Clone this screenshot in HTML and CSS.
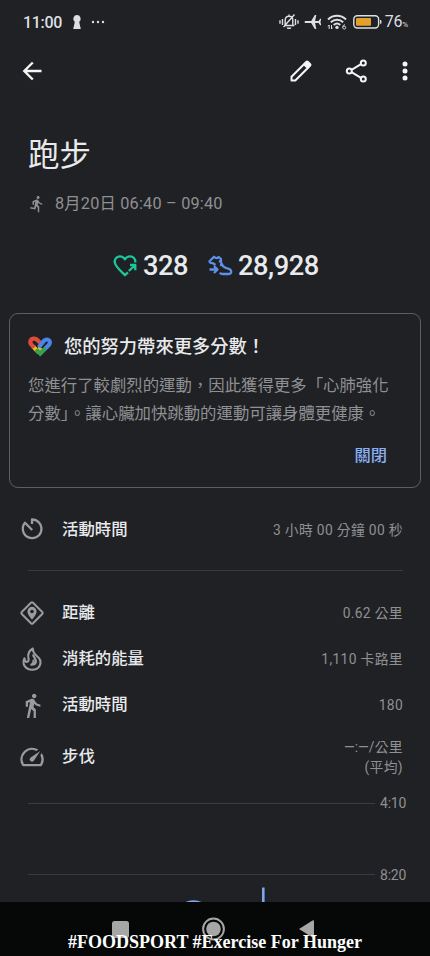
FILE: index.html
```html
<!DOCTYPE html>
<html lang="zh-Hant">
<head>
<meta charset="utf-8">
<meta name="viewport" content="width=device-width, initial-scale=1">
<title>跑步</title>
<link rel="stylesheet" href="styles.css">
</head>
<body>
<div class="screen">
  <header class="status">
    <span class="clock">11:00</span>
    <svg class="keyhole" width="10" height="16" viewBox="0 0 10 16"><path d="M5 1a3.700 3.700 0 0 0-2.400 6.500V9L1.200 15h7.600L7.400 9V7.500A3.700 3.700 0 0 0 5 1z"/></svg>
    <svg class="dots" width="14" height="4" viewBox="0 0 14 4"><circle cx="2" cy="2" r="1.200"/><circle cx="7" cy="2" r="1.200"/><circle cx="12" cy="2" r="1.200"/></svg>
    <span class="spacer"></span>
    <svg class="mute" width="20" height="18" viewBox="0 0 20 18"><path class="line" d="M5 12.500h10.500M6.200 12V7.300c0-2.500 1.500-4 3.800-4 2.200 0 3.800 1.500 3.800 4V12M10 1.500v1.500M15.500 1.500 4.500 14M3.500 6v6M1 7.300v3.400M16.500 6v6M19 7.300v3.400"/><path d="M7.500 14.500h5L11.500 16h-3z"/></svg>
    <svg class="plane" width="18" height="16" viewBox="0 0 18 16"><path d="M.5 8c0-.7.7-1.100 1.500-1.100h5.200L10.800 1h1.500l-1.200 5.900h3.500l1.500-2.100h1.100L16.500 8l.7 3.200h-1.100l-1.500-2.100h-3.500l1.200 5.900h-1.500L7.200 9.100H2C1.200 9.100.5 8.700.5 8z"/></svg>
    <svg class="wifi" width="20" height="16" viewBox="0 0 20 16"><path class="line thick" d="M1 5.500c5-5 13-5 18 0M3.800 8.300c3.500-3.400 8.900-3.400 12.400 0M6.700 11c2-1.800 4.600-1.800 6.600 0"/><circle cx="10" cy="13.400" r="1.700"/><path class="line thin" d="M2.200 15v-4L1 12.300M4.500 11v4l1.200-1.300M18 10.800c-1.500.2-2.300 1-2.300 2.500 0 2.300 3 2.300 3 .3 0-1.700-2.300-1.700-2.900-.3"/></svg>
    <svg class="battery" width="29" height="14" viewBox="0 0 29 14"><rect class="line" x=".8" y=".8" width="24.800" height="12.200" rx="3.500"/><rect class="charge" x="3" y="3" width="15" height="7.800" rx="1"/><path d="M27 5h.5c.8 0 1 .7 1 1.900s-.2 1.900-1 1.900H27z"/></svg>
    <span class="percent">76<small>%</small></span>
  </header>

  <nav class="appbar">
    <svg width="24" height="24" viewBox="0 0 24 24"><path class="back" d="M21.500 12H4M12.800 3.500 4.300 12l8.500 8.500"/></svg>
    <span class="spacer"></span>
    <svg class="edit" width="24" height="24" viewBox="0 0 24 24"><path class="line" d="M2.500 21.500v-3.800L15 5.200l3.800 3.800L6.300 21.500z"/><path d="m14.300 4.500 2.400-2.400c.8-.8 1.900-.8 2.700 0l2.500 2.500c.8.800.8 1.900 0 2.700l-2.400 2.400z"/></svg>
    <svg class="share" width="24" height="24" viewBox="0 0 24 24"><path class="line" d="M6.500 10.800 16 5.200M6.500 13.200l9.500 5.600"/><circle class="line" cx="4.300" cy="12" r="2.500"/><circle class="line" cx="18.300" cy="4" r="2.500"/><circle class="line" cx="18.300" cy="20" r="2.500"/></svg>
    <svg class="more" width="6" height="22" viewBox="0 0 6 22"><circle cx="3" cy="4" r="2.500"/><circle cx="3" cy="11" r="2.500"/><circle cx="3" cy="18" r="2.500"/></svg>
  </nav>

  <section class="intro">
    <h1>跑步</h1>
    <p class="date">
      <svg width="18" height="18" viewBox="0 0 24 24"><path d="M13.490 5.480c1.100 0 2-.9 2-2s-.9-2-2-2-2 .9-2 2 .9 2 2 2zm-3.600 13.900 1-4.400 2.100 2v6h2v-7.500l-2.100-2 .6-3c1.300 1.500 3.300 2.500 5.500 2.500v-2c-1.900 0-3.500-1-4.300-2.400l-1-1.600c-.4-.6-1-1-1.700-1-.3 0-.5.100-.8.100l-5.200 2.200v4.700h2v-3.400l1.800-.7-1.600 8.100-4.900-1-.4 2z"/></svg>
      <span>8月20日 06:40 – 09:40</span>
    </p>
  </section>

  <section class="scores">
    <svg class="heart" width="24" height="22" viewBox="0 0 24 22"><path d="M22.300 7.500c.3-3.600-2.200-6.200-5.300-6.200-2.200 0-3.900 1-5 3-1.200-2-2.900-3-5.200-3C3.400 1.300.9 4.700 2 8.200c1.100 4 5.800 7.600 10 12l3-2.800M15.800 16l6.500-6M17 10h5.300v5.300"/></svg>
    <strong>328</strong>
    <svg class="shoe" width="25" height="21" viewBox="0 0 25 21"><path d="M1.500 7.500V6.200L6 1.800c1.800 1.900 3.500 1.500 4.700.2l2.300 2c-.6 2.300 0 4 1.200 5.800 1.200 2.800 3.700 3.300 6.500 4 3.300.8 3.200 5.200.3 5.200h-6c-1.500 0-2.500-.4-3.300-1.200M13 6.300h-2.200M14.200 10H12M1.500 14.500h7M6 11l3.500 3.500L6 18M1.500 7.500c2.300 0 4.300.8 6 2.300"/></svg>
    <strong>28,928</strong>
  </section>

  <section class="card">
    <h2>
      <svg width="24" height="21" viewBox="0 0 24 21"><path class="yellow" d="m5 10.600 4.400 4.400 3.600-3.600"/><path class="green" d="m8 13.600 4.200 4 5.400-5.400"/><path class="red" d="M6.200 11.500 3.700 9C1 6.300 2.500 2.700 6.100 2.700c1.600 0 2.500.6 3.500 1.600l2.600 2.500"/><path class="blue" d="m10.800 11.200 5.100-6.300c3-3.500 8.300.2 4.900 4.100l-3.500 3.500"/></svg>
      <span>您的努力帶來更多分數！</span>
    </h2>
    <p>您進行了較劇烈的運動，因此獲得更多「心肺強化<br>分數」。讓心臟加快跳動的運動可讓身體更健康。</p>
    <button type="button">關閉</button>
  </section>

  <section class="rows">
    <div class="row first">
      <svg width="24" height="24" viewBox="0 0 24 24"><path class="line timer" d="M12 7V2.500a9.300 9.300 0 1 1-7 3.300l7.200 7.200"/></svg>
      <span>活動時間</span><em>3 小時 00 分鐘 00 秒</em>
    </div>
    <hr>
    <div class="row">
      <svg width="26" height="26" viewBox="0 0 26 26"><rect class="line" x="5" y="5" width="16" height="16" rx="1.500" transform="rotate(45 13 13)"/><path fill-rule="evenodd" d="M13 6.800A4.600 4.600 0 0 0 8.400 11.400c0 3.400 4.600 8.100 4.600 8.100s4.600-4.700 4.600-8.100A4.600 4.600 0 0 0 13 6.800zm0 2.900a1.800 1.800 0 1 1 0 3.600 1.800 1.800 0 0 1 0-3.600z"/></svg>
      <span>距離</span><em>0.62 公里</em>
    </div>
    <div class="row">
      <svg width="24" height="26" viewBox="0 0 24 26"><path class="line flame" d="M12.800 2.500c-4 2.500-5.300 6.300-4.300 10 .5 1.800-.2 3.500-1.600 3.500-1.500 0-2.400-1.500-2.400-3.800-2.800 5.800.8 11.600 7.500 11.600 7.800 0 10.300-7 7-11.600-1.700-2.400-6.200-3.600-6.200-9.700z"/><path class="line flame" d="M13 8.500c.3 2.500 3 4 3 6.700 0 2.200-1.500 3.500-4.800 3.500 2-1 3-2.700 2-5"/></svg>
      <span>消耗的能量</span><em>1,110 卡路里</em>
    </div>
    <div class="row">
      <svg width="27" height="27" viewBox="0 0 24 24"><path d="M13.500 5.500c1.100 0 2-.9 2-2s-.9-2-2-2-2 .9-2 2 .9 2 2 2zM9.800 8.900 7 23h2.100l1.800-8 2.100 2v6h2v-7.500l-2.100-2 .6-3C14.800 12 16.800 13 19 13v-2c-1.900 0-3.500-1-4.300-2.400l-1-1.600c-.4-.6-1-1-1.700-1-.3 0-.5.100-.8.100L6 8.300V13h2V9.600l1.800-.7"/></svg>
      <span>活動時間</span><em>180</em>
    </div>
    <div class="row tall">
      <svg width="28" height="28" viewBox="0 0 24 24"><path d="m20.380 8.570-1.230 1.850a8 8 0 0 1-.22 7.580H5.070A8 8 0 0 1 15.580 6.850l1.850-1.230A10 10 0 0 0 3.350 19a2 2 0 0 0 1.720 1h13.850a2 2 0 0 0 1.740-1 10 10 0 0 0-.27-10.440z"/><path d="M10.590 15.410a2 2 0 0 0 2.830 0l5.660-8.490-8.490 5.660a2 2 0 0 0 0 2.830z"/></svg>
      <span>步伐</span><em><b>—:—</b>/公里<br>(平均)</em>
    </div>
  </section>

  <section class="chart">
    <div class="tick"><i></i><span>4:10</span></div>
    <div class="tick"><i></i><span>8:20</span></div>
    <svg class="trace" width="347" height="16" viewBox="0 0 347 16"><path class="curve" d="M158 17c4-2.200 11-2.200 15 0"/><path d="M234 1.500h2.600V16H234z"/></svg>
  </section>

  <footer>
    <svg width="216" height="26" viewBox="0 0 216 26"><rect x="4" y="5" width="17" height="17" rx="2.500"/><circle cx="105.500" cy="13" r="7.300"/><circle class="line" cx="105.500" cy="13" r="10.400"/><path d="M191 13 204.500 4.500q1.500-.8 1.500 1v15q0 1.800-1.500 1z"/></svg>
    <p>#FOODSPORT #Exercise For Hunger</p>
  </footer>
</div>
</body>
</html>
```
FILE: styles.css
```css
* { box-sizing: border-box; }
body { margin: 0; background: #202124; }
h1, h2, p { margin: 0; font-weight: 400; }
svg { display: block; flex: none; fill: currentColor; overflow: visible; }
.line { fill: none; stroke: currentColor; stroke-width: 2; stroke-linejoin: round; }
.spacer { flex: 1; }

.screen {
  width: 430px;
  height: 956px;
  display: flex;
  flex-direction: column;
  overflow: hidden;
  background: #202124;
  color: #e8eaed;
  font-family: Roboto, "Noto Sans CJK TC", sans-serif;
}
.status, .appbar, .intro, .scores, .card, .rows { flex: none; }

.status {
  height: 44px;
  padding: 0 22px 0 23px;
  display: flex;
  align-items: center;
  color: #dedfe1;
}
.status .line { stroke-width: 1.4; }
.status .thick { stroke-width: 1.9; }
.status .thin { stroke-width: 1; }
.clock { font-size: 16px; font-weight: 500; letter-spacing: -.3px; line-height: 20px; margin-top: 2px; }
.keyhole { margin-left: 10px; }
.dots { margin-left: 9px; }
.plane { margin-left: 5px; }
.wifi { margin-left: 5px; }
.battery { margin-left: 6px; }
.battery .charge { fill: #e5a02c; }
.percent { margin: 2px 0 0 3px; font-size: 16px; font-weight: 400; letter-spacing: -.2px; line-height: 20px; }
.percent small { font-size: 8px; }

.appbar {
  height: 54px;
  padding: 0 22px 0 20px;
  display: flex;
  align-items: center;
  color: #f5f5f5;
}
.back { fill: none; stroke: currentColor; stroke-width: 2.4; }
.share { margin-left: 32px; }
.more { margin-left: 33px; }

.intro { height: 129px; padding: 34px 28px 0; }
h1 { font-size: 31.500px; line-height: 48px; }
.date {
  margin-top: 12px;
  display: flex;
  align-items: center;
  gap: 9px;
  font-size: 16.300px;
  letter-spacing: .2px;
  line-height: 24px;
  color: #8f9093;
}

.scores {
  height: 76px;
  padding: 1px 0 0 113px;
  display: flex;
  align-items: center;
}
.scores strong { width: 45px; font-size: 27.300px; font-weight: 500; letter-spacing: -.5px; line-height: 32px; margin-left: 6px; }
.scores path { fill: none; stroke: currentColor; stroke-width: 2.3; stroke-linejoin: round; }
.heart { color: #1cc69b; }
.shoe { color: #5f91ea; margin-left: 20px; }
.scores .shoe + strong { margin-left: 5px; width: auto; }

.card {
  width: 412px;
  height: 175px;
  margin: 10px 0 0 9px;
  padding: 19px 18px 0;
  border: 1px solid #5c5e61;
  border-radius: 9px;
  display: flex;
  flex-direction: column;
}
h2 { display: flex; align-items: center; gap: 12px; font-size: 18.300px; font-weight: 500; line-height: 28px; }
h2 svg { margin-top: -1px; }
h2 path { fill: none; stroke-width: 4.200; }
.red { stroke: #df4a3d; }
.blue { stroke: #4a86e8; }
.yellow { stroke: #f5b91c; }
.green { stroke: #34a252; }
.card p { margin-top: 11px; font-size: 16.400px; line-height: 28px; color: #8f9093; white-space: nowrap; }
.card button {
  align-self: flex-end;
  margin: 16px 15px 0 0;
  padding: 0;
  border: 0;
  background: none;
  color: #8ab0f5;
  font: 500 16.300px/24px Roboto, "Noto Sans CJK TC", sans-serif;
}

.rows { padding: 18px 27px 0 19px; }
.row { height: 46px; display: grid; grid-template-columns: 26px 1fr auto; column-gap: 17px; align-items: center; }
.row.tall { height: 57px; }
.row svg { color: #999b9e; justify-self: center; }
.row .timer { stroke-width: 2.3; }
.row .flame { stroke-width: 2.1; }
.row span { font-size: 16.400px; font-weight: 500; line-height: 24px; }
.row.first span, .row.first em { padding-top: 2px; }
.row em {
  font-style: normal;
  font-size: 13.800px;
  letter-spacing: .35px;
  line-height: 20px;
  text-align: right;
  color: #8f9093;
}
.row b { font-weight: 400; letter-spacing: -.1px; }
hr { margin: 18px 0 19px 9px; height: 1px; border: 0; background: #3b3c3f; }

.chart { flex: 1; min-height: 0; margin-left: 28px; padding-top: 8px; position: relative; }
.tick { height: 20px; display: flex; align-items: center; gap: 5px; margin-bottom: 51.500px; }
.tick i { width: 347px; height: 1px; background: #3b3c3f; }
.tick span { font-size: 14px; letter-spacing: -.2px; color: #8f9093; }
.trace { position: absolute; left: 0; bottom: 0; color: #7fa5ed; }
.curve { fill: none; stroke: currentColor; stroke-width: 2; }

footer { height: 54px; flex: none; padding: 14px 0 0 108px; background: #060807; position: relative; color: #a5a6a5; }
footer p {
  position: absolute;
  left: 0;
  right: 0;
  top: 30px;
  text-align: center;
  font: 700 18px/20px "Liberation Serif", serif;
  color: #fff;
  white-space: nowrap;
}
```
